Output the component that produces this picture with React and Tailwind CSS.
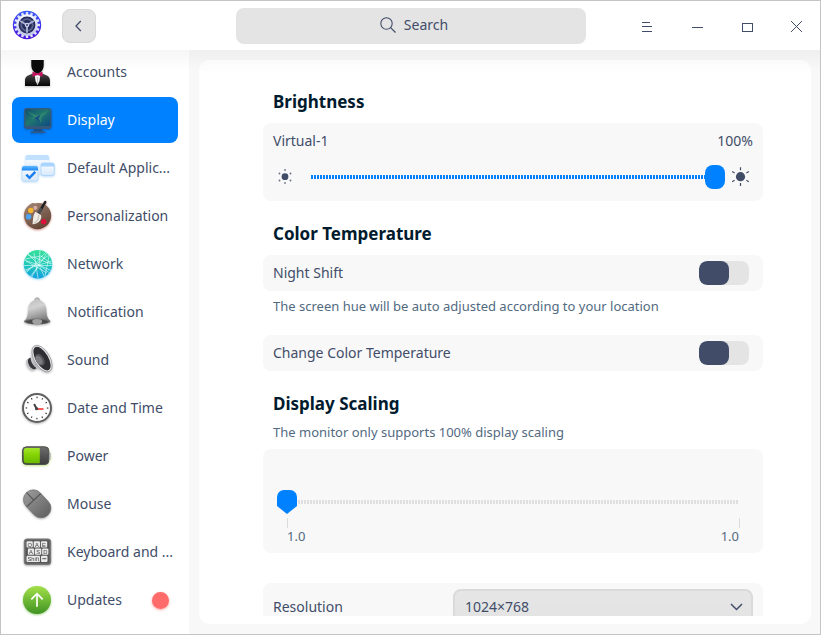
import React from "react";

function AppLogo() {
  const teeth = Array.from({ length: 16 }, (_, i) => i * 22.5);
  return (
    <svg width="30" height="30" viewBox="0 0 30 30" className="-mt-px shrink-0">
      <defs>
        <linearGradient id="logoBg" x1="0" y1="0" x2="0" y2="1">
          <stop offset="0" stopColor="#3a5cf8" />
          <stop offset="1" stopColor="#4a10d8" />
        </linearGradient>
        <linearGradient id="logoRing" x1="0" y1="0" x2="0" y2="1">
          <stop offset="0" stopColor="#f4f6ff" />
          <stop offset="1" stopColor="#c3c8e8" />
        </linearGradient>
      </defs>
      <circle cx="15" cy="15" r="14.2" fill="url(#logoBg)" />
      {teeth.map((a) => (
        <rect key={a} x="13.8" y="2" width="2.4" height="4" fill="#dfe3fb" transform={`rotate(${a} 15 15)`} />
      ))}
      <circle cx="15" cy="15" r="9.6" fill="#262d5c" stroke="url(#logoRing)" strokeWidth="2.4" />
      <circle cx="15" cy="15" r="5.800" fill="none" stroke="#59628e" strokeWidth="1.800" />
      <path d="M15 15L8.200 11M15 15l6.800-4M15 15v7.800" stroke="#a9b0d2" strokeWidth="1.900" />
      <circle cx="15" cy="15" r="2.200" fill="#cdd2ea" />
      <circle cx="15" cy="15" r="1" fill="#343c70" />
    </svg>
  );
}

function AccountsIcon() {
  return (
    <svg width="32" height="32" viewBox="0 0 32 32" className="drop-shadow-[0_1px_1px_rgba(0,0,0,0.25)]">
      <defs>
        <linearGradient id="suit" x1="0" y1="0" x2="0" y2="1">
          <stop offset="0" stopColor="#4a4a4a" />
          <stop offset="1" stopColor="#050505" />
        </linearGradient>
      </defs>
      <path d="M4 30v-5c0-4 2-5.500 5.500-6.500L13 17h7l3.500 1.500C27 19.500 29 21 29 25v5z" fill="url(#suit)" />
      <path d="M13.500 17.500h6L18.500 25l-2 4-2-4z" fill="#f5f5f5" />
      <path d="M10.300 3c0-2 12.400-2 12.400 0v6c0 4-2.500 8.500-6.200 8.500s-6.200-4.500-6.200-8.500z" fill="#0b0b0b" />
      <path d="M11.500 15.800l5 1.500 5-1.500v5l-5-1.700-5 1.700z" fill="#c2145f" />
      <path d="M16.500 21v8" stroke="#bbb" strokeWidth=".8" />
    </svg>
  );
}

function DisplayIcon() {
  return (
    <svg width="32" height="32" viewBox="0 0 32 32" className="drop-shadow-[0_1px_1px_rgba(0,40,90,0.35)]">
      <defs>
        <linearGradient id="screen" x1="0" y1="0" x2="1" y2="1">
          <stop offset="0" stopColor="#124f72" />
          <stop offset=".45" stopColor="#20766f" />
          <stop offset="1" stopColor="#0d4a82" />
        </linearGradient>
      </defs>
      <path d="M13 24h8l.5 3.500h-9z" fill="#164f89" />
      <rect x="9.500" y="27.200" width="15" height="1.800" rx=".9" fill="#2c5987" />
      <rect x="3" y="4" width="27.500" height="21" rx="3" fill="#35587b" />
      <rect x="4.300" y="5.200" width="25" height="16.800" rx="1.800" fill="url(#screen)" />
      <path d="M6 7l10 4.500L27 7l-6 6-1 6-4-3.500L9 14l5-.5z" fill="#43a36b" opacity=".45" />
      <path d="M13 14.500l7-4.500-2.500 4.500 2 4-4-3z" fill="#184d88" />
    </svg>
  );
}

function DefaultAppsIcon() {
  return (
    <svg width="34" height="32" viewBox="0 0 34 32" className="drop-shadow-[0_1px_1px_rgba(90,170,240,0.4)]">
      <defs>
        <linearGradient id="pane" x1="0" y1="0" x2="0" y2="1">
          <stop offset="0" stopColor="#fdfeff" />
          <stop offset="1" stopColor="#d7e8fb" />
        </linearGradient>
        <linearGradient id="bar" x1="0" y1="0" x2="0" y2="1">
          <stop offset="0" stopColor="#5ab7ff" />
          <stop offset="1" stopColor="#1c86f5" />
        </linearGradient>
      </defs>
      <rect x="4.500" y="3" width="23.500" height="19" rx="2" fill="url(#pane)" />
      <path d="M4.500 8V5a2 2 0 0 1 2-2H26a2 2 0 0 1 2 2v3z" fill="#c2e0ff" />
      <rect x="20" y="11" width="13.300" height="12.500" rx="2" fill="url(#pane)" stroke="#a9d2fb" strokeWidth=".8" />
      <path d="M20 14.500V13a2 2 0 0 1 2-2h9.300a2 2 0 0 1 2 2v1.500z" fill="#a9d4ff" />
      <rect x="1" y="14" width="16" height="15" rx="2" fill="url(#pane)" stroke="#b5d9fb" strokeWidth=".7" />
      <path d="M1 18.500V16a2 2 0 0 1 2-2H15a2 2 0 0 1 2 2v2.500z" fill="url(#bar)" />
      <path d="M5.300 22.600l3.200 3.200 5.800-6" fill="none" stroke="#1a7df0" strokeWidth="2.500" />
    </svg>
  );
}

function PersonalizationIcon() {
  return (
    <svg width="32" height="32" viewBox="0 0 32 32" className="drop-shadow-[0_1px_1px_rgba(160,50,30,0.5)]">
      <defs>
        <linearGradient id="wood" x1="0" y1="0" x2=".6" y2="1">
          <stop offset="0" stopColor="#a48878" />
          <stop offset="1" stopColor="#644537" />
        </linearGradient>
      </defs>
      <path d="M16.500 3C24 2 30.200 8 30.200 15.500S24 29.200 16.500 29.200 3 23 3 15.500C3 9 7.500 4.500 11.500 3c2-.5 2.500 1 5 0z" fill="url(#wood)" />
      <circle cx="9.800" cy="10.500" r="2.700" fill="#f6b62f" />
      <circle cx="14.300" cy="7.800" r="2.100" fill="#d7aba3" />
      <circle cx="7.600" cy="16.700" r="2.800" fill="#4da2f4" />
      <circle cx="22.700" cy="21.700" r="2.700" fill="#e0103c" />
      <path d="M24.200 2.200L19.500 10" stroke="#222" strokeWidth="2.600" strokeLinecap="round" />
      <path d="M20.800 8.500l-3.500 5" stroke="#4c4c4c" strokeWidth="3.200" />
      <path d="M14.500 11.800l5.600 3.400c1 4-2.100 8.600-8.600 9.100.8-4 0-8.900 3-12.500z" fill="#efece6" />
      <path d="M17.800 15c0 4-2 6.800-5 8.300" fill="none" stroke="#cac4bb" strokeWidth="1.200" />
    </svg>
  );
}

function NetworkIcon() {
  return (
    <svg width="32" height="32" viewBox="0 0 32 32" className="drop-shadow-[0_1px_1px_rgba(40,180,240,0.5)]">
      <defs>
        <linearGradient id="net" x1="0" y1="0" x2="0" y2="1">
          <stop offset="0" stopColor="#37e09a" />
          <stop offset=".55" stopColor="#1fc7bd" />
          <stop offset="1" stopColor="#139fe0" />
        </linearGradient>
        <clipPath id="netClip">
          <circle cx="17" cy="16.300" r="14.200" />
        </clipPath>
      </defs>
      <circle cx="17" cy="16.300" r="14.200" fill="url(#net)" />
      <g clipPath="url(#netClip)" fill="none" stroke="#e6fffa" strokeWidth=".7" opacity=".85">
        <path d="M3 12l15 5 8-12M3 17.500h28M18 17L7 6M18 17l13-4M19 2l-1 15-8 13M18 17l6 13M4 24l24-17M13 5l4 25M5 13l21 12M25 4L6 24M9 29l9-12 13 6M31 16L20 8l-16 3M28 8l-4 20M7 7l23 9M18 17L4 22M18 17l12 9" />
      </g>
    </svg>
  );
}

function NotificationIcon() {
  return (
    <svg width="32" height="32" viewBox="0 0 32 32" className="drop-shadow-[0_1px_1px_rgba(0,0,0,0.3)]">
      <defs>
        <linearGradient id="bell" x1="0" y1="0" x2=".35" y2="1">
          <stop offset="0" stopColor="#bcbcbc" />
          <stop offset=".4" stopColor="#d2d2d2" />
          <stop offset="1" stopColor="#7c7c7c" />
        </linearGradient>
      </defs>
      <circle cx="16.200" cy="4" r="2.200" fill="#c4c4c4" stroke="#999" strokeWidth=".8" />
      <path d="M16.200 4C10 4 7.600 8.500 7.200 13c-.4 5-.2 8.500-4 12 2 2.500 24.400 2.500 26.200 0-3.800-3.500-3.800-7-4.200-12C24.800 8.500 22.400 4 16.200 4z" fill="url(#bell)" />
      <ellipse cx="16.200" cy="25.500" rx="13.200" ry="2.900" fill="#707070" />
      <ellipse cx="16.200" cy="25.700" rx="11.400" ry="2.100" fill="#4a4a4a" />
      <path d="M11.200 25.200c0-2.800 10-2.800 10 0 0 4.600-10 4.600-10 0z" fill="#a1a1a1" />
    </svg>
  );
}

function SoundIcon() {
  return (
    <svg width="32" height="32" viewBox="0 0 32 32" className="drop-shadow-[0_1px_1px_rgba(0,0,0,0.3)]">
      <defs>
        <linearGradient id="horn" x1="0" y1="0" x2="1" y2="1">
          <stop offset="0" stopColor="#e9e9ec" />
          <stop offset=".5" stopColor="#b4b4ba" />
          <stop offset="1" stopColor="#f0f0f0" />
        </linearGradient>
      </defs>
      <ellipse cx="9.700" cy="20.500" rx="3.800" ry="6.300" transform="rotate(-30 9.700 20.500)" fill="#c2c2c8" />
      <ellipse cx="11.300" cy="19.600" rx="3.600" ry="6.300" transform="rotate(-30 11.300 19.600)" fill="#37373c" />
      <path d="M12.200 1.500C11.200 7 10.500 11 9.500 14c.5 4.500 2.700 8 6.500 10.500 4 .5 9 2.500 13 3z" fill="url(#horn)" />
      <ellipse cx="21" cy="14.600" rx="7" ry="14" transform="rotate(-31 21 14.600)" fill="#2f2f33" stroke="#e4e4e6" strokeWidth="1.500" />
      <ellipse cx="21" cy="14.600" rx="7.800" ry="14.800" transform="rotate(-31 21 14.600)" fill="none" stroke="#77777b" strokeWidth=".5" />
      <ellipse cx="19" cy="15.700" rx="3.900" ry="6.600" transform="rotate(-31 19 15.700)" fill="#55555a" />
      <ellipse cx="18" cy="16.200" rx="2.900" ry="4.800" transform="rotate(-31 18 16.200)" fill="#7c7c82" />
    </svg>
  );
}

function ClockIcon() {
  const marks = Array.from({ length: 12 }, (_, i) => i * 30);
  return (
    <svg width="32" height="32" viewBox="0 0 32 32" className="drop-shadow-[0_1px_1px_rgba(0,0,0,0.3)]">
      <circle cx="16" cy="16" r="14" fill="#fff" stroke="#606060" strokeWidth="2" />
      {marks.map((a) => (
        <rect key={a} x="15.500" y="4.600" width="1.100" height="1.600" fill="#333" transform={`rotate(${a} 16 16)`} />
      ))}
      <path d="M15.500 16.500l-2-3.800" stroke="#404040" strokeWidth="2" strokeLinecap="round" />
      <path d="M16 17h6.500" stroke="#ff5b57" strokeWidth="2" />
      <circle cx="15.600" cy="16.700" r="1.600" fill="#484848" />
    </svg>
  );
}

function PowerIcon() {
  return (
    <svg width="32" height="32" viewBox="0 0 32 32" className="drop-shadow-[0_1px_1px_rgba(120,190,0,0.45)]">
      <defs>
        <linearGradient id="charge" x1="0" y1="0" x2="0" y2="1">
          <stop offset="0" stopColor="#a3e52c" />
          <stop offset=".45" stopColor="#84d400" />
          <stop offset="1" stopColor="#6ab900" />
        </linearGradient>
        <linearGradient id="cell" x1="0" y1="0" x2="0" y2="1">
          <stop offset="0" stopColor="#6d6d6d" />
          <stop offset="1" stopColor="#3c3c3c" />
        </linearGradient>
      </defs>
      <rect x="27" y="12.500" width="3" height="7" rx="1" fill="#c3c3c3" />
      <rect x="1.500" y="6.800" width="26.300" height="17.700" rx="4" fill="url(#cell)" stroke="#505050" />
      <path d="M18.800 8H5a2.500 2.500 0 0 0-2.300 2.200v10.600A2.500 2.500 0 0 0 5 23.300h13.800z" fill="url(#charge)" />
    </svg>
  );
}

function MouseIcon() {
  return (
    <svg width="32" height="32" viewBox="0 0 32 32" className="drop-shadow-[0_1px_1px_rgba(0,0,0,0.3)]">
      <defs>
        <linearGradient id="mouseBody" x1="0" y1="0" x2="0" y2="1">
          <stop offset="0" stopColor="#989898" />
          <stop offset="1" stopColor="#636363" />
        </linearGradient>
      </defs>
      <g transform="rotate(-43 16 16)">
        <rect x="6.500" y="0.500" width="19.500" height="31" rx="9.700" fill="url(#mouseBody)" stroke="#696969" strokeWidth=".6" />
        <path d="M6.800 11h19M16.200 .5V11" stroke="#4e4e4e" strokeWidth="1" />
      </g>
    </svg>
  );
}

function KeyboardIcon() {
  const keys = [
    [5.5, 5.3, "Q"], [12.700, 5.3, "A"], [19.900, 5.3, "E"],
    [6.900, 12.500, "A"], [14, 12.500, "S"], [21.100, 12.500, "D"],
  ];
  return (
    <svg width="32" height="32" viewBox="0 0 32 32" className="font-['Liberation_Sans',sans-serif] drop-shadow-[0_1px_1px_rgba(0,0,0,0.3)]">
      <rect x="3.300" y="3" width="26.400" height="25.500" rx="2.500" fill="#666" stroke="#777" />
      <rect x="5" y="4.700" width="23" height="22" fill="#555" />
      {keys.map(([x, y, t], i) => (
        <g key={i}>
          <rect x={x} y={y} width="6.300" height="6.300" rx="1" fill="#e9e9e9" />
          <text x={x + 3.150} y={y + 5.300} fontSize="5.800" textAnchor="middle" fill="#444">{t}</text>
        </g>
      ))}
      <rect x="5.500" y="19.700" width="13.500" height="6.300" rx="1" fill="#e9e9e9" />
      <text x="12.200" y="25" fontSize="5.800" textAnchor="middle" fill="#444">Shift</text>
      <rect x="20" y="19.700" width="6.500" height="6.300" rx="1" fill="#e9e9e9" />
      <path d="M21.300 22.700h4" stroke="#555" />
    </svg>
  );
}

function UpdatesIcon() {
  return (
    <svg width="32" height="32" viewBox="0 0 32 32" className="drop-shadow-[0_1px_1px_rgba(80,170,30,0.5)]">
      <defs>
        <linearGradient id="upd" x1="0" y1="0" x2="0" y2="1">
          <stop offset="0" stopColor="#a3e048" />
          <stop offset="1" stopColor="#3f9324" />
        </linearGradient>
      </defs>
      <circle cx="16" cy="16" r="14" fill="url(#upd)" />
      <path d="M16 22.700V10M10.300 15.300L16 9.600l5.700 5.700" fill="none" stroke="#fff" strokeWidth="1.700" />
    </svg>
  );
}

const items = [
  { label: "Accounts", Icon: AccountsIcon },
  { label: "Display", Icon: DisplayIcon, active: true },
  { label: "Default Applic...", Icon: DefaultAppsIcon },
  { label: "Personalization", Icon: PersonalizationIcon },
  { label: "Network", Icon: NetworkIcon },
  { label: "Notification", Icon: NotificationIcon },
  { label: "Sound", Icon: SoundIcon },
  { label: "Date and Time", Icon: ClockIcon },
  { label: "Power", Icon: PowerIcon },
  { label: "Mouse", Icon: MouseIcon },
  { label: "Keyboard and ...", Icon: KeyboardIcon },
  { label: "Updates", Icon: UpdatesIcon, badge: true },
];

function TitleBar() {
  return (
    <header className="flex h-[49px] shrink-0 items-center bg-white pl-[11px]">
      <AppLogo />
      <button className="mt-px ml-5 flex h-[34px] w-[34px] items-center justify-center rounded-lg border border-[#d9d9d9] bg-[#e4e4e4]">
        <svg width="10" height="12" viewBox="0 0 10 12">
          <path d="M6.800 1L2 6l4.800 5" fill="none" stroke="#414d68" strokeWidth="1.300" />
        </svg>
      </button>
      <div className="ml-[140px] flex h-9 w-[350px] items-center justify-center gap-2 rounded-lg bg-[#e4e4e4] pb-px pl-[6px]">
        <svg width="16" height="16" viewBox="0 0 16 16">
          <circle cx="6.500" cy="6.500" r="5.700" fill="none" stroke="#414d68" strokeWidth="1.100" />
          <path d="M10.600 10.600L15.500 15.500" stroke="#414d68" strokeWidth="1.200" />
        </svg>
        <span>Search</span>
      </div>
      <div className="ml-[55px] flex items-center gap-[38px] pt-[2px]">
        <svg width="12" height="12" viewBox="0 0 12 12" shapeRendering="crispEdges">
          <path d="M1 1.500h8M1 5.500h10M1 10.500h10" stroke="#414d68" />
        </svg>
        <svg width="12" height="12" viewBox="0 0 12 12" shapeRendering="crispEdges">
          <path d="M1 6.500h11" stroke="#414d68" />
        </svg>
        <svg width="12" height="12" viewBox="0 0 12 12" shapeRendering="crispEdges">
          <rect x="1.500" y="2.500" width="10" height="8" fill="none" stroke="#414d68" />
        </svg>
        <svg width="12" height="12" viewBox="0 0 12 12">
          <path d="M0 0l11 11M11 0L0 11" stroke="#414d68" />
        </svg>
      </div>
    </header>
  );
}

function Sidebar() {
  return (
    <nav className="w-[188px] shrink-0 overflow-hidden bg-white bg-linear-to-b from-[#f6f6f6] to-white bg-[length:100%_20px] bg-no-repeat pt-[10px]">
      <div className="h-[564px] overflow-hidden">
        <ul className="-mt-[11px] flex flex-col gap-[2px] pl-[11px]">
          {items.map(({ label, Icon, active, badge }) => (
            <li
              key={label}
              className={
                active
                  ? "flex h-[46px] w-[166px] items-center rounded-lg bg-[#0081ff] pl-[9px] text-white"
                  : "flex h-[46px] w-[166px] items-center pl-[9px]"
              }
            >
              <span className="flex w-[34px] shrink-0 items-center">
                <Icon />
              </span>
              <span className="ml-3 whitespace-nowrap">{label}</span>
              {badge && (
                <span className="mr-[9px] ml-auto h-[17px] w-[17px] rounded-full bg-[#ff6a6a] shadow-[0_1px_3px_rgba(255,106,106,0.6)]" />
              )}
            </li>
          ))}
        </ul>
      </div>
    </nav>
  );
}

function Toggle() {
  return (
    <div className="h-6 w-[50px] overflow-hidden rounded-lg bg-[#e4e4e4]">
      <div className="h-6 w-[30px] rounded-lg bg-[#414d68]" />
    </div>
  );
}

function SwitchRow({ label }) {
  return (
    <div className="flex h-9 items-center justify-between rounded-lg bg-[#f8f8f8] pr-[14px] pl-[10px]">
      <span>{label}</span>
      <Toggle />
    </div>
  );
}

function Heading({ children }) {
  return <h2 className="pl-[10px] text-[17px] leading-6 font-bold text-[#001a2e]">{children}</h2>;
}

function DimSun() {
  return (
    <svg width="16" height="16" viewBox="0 0 16 16" fill="#414d68">
      <circle cx="8" cy="7.700" r="3.400" />
      <g opacity=".5">
        <rect x="7" y="0" width="2" height="2" />
        <rect x="7" y="13" width="2" height="2" />
      </g>
      <g opacity=".8">
        <circle cx="2.500" cy="4.500" r=".9" />
        <circle cx="13.500" cy="4.500" r=".9" />
        <circle cx="2.500" cy="11.500" r=".9" />
        <circle cx="13.500" cy="11.500" r=".9" />
      </g>
    </svg>
  );
}

function BrightSun() {
  return (
    <svg width="20" height="20" viewBox="0 0 20 20">
      <circle cx="10.500" cy="9.700" r="4.600" fill="#414d68" />
      <path
        d="M10.500 .3v3M10.500 16v3M2.200 4.600l2.400 1.400M18.800 4.600l-2.400 1.400M2.200 14.700l2.400-1.400M18.800 14.700l-2.400-1.400"
        stroke="#414d68"
        strokeWidth="1.200"
      />
    </svg>
  );
}

function BrightnessCard() {
  return (
    <section className="mt-[9px] h-[78px] rounded-lg bg-[#f8f8f8] px-[10px] pt-2">
      <div className="flex h-5 items-center justify-between">
        <span>Virtual-1</span>
        <span>100%</span>
      </div>
      <div className="mt-[14px] flex h-6 items-center pl-1">
        <DimSun />
        <div className="ml-[18px] h-1 w-[394px] bg-[repeating-linear-gradient(90deg,#0081ff_0_2px,transparent_2px_3px)]" />
        <div className="h-6 w-5 rounded-lg bg-[#0081ff]" />
        <div className="ml-[5px]">
          <BrightSun />
        </div>
      </div>
    </section>
  );
}

function ScalingCard() {
  return (
    <section className="mt-[7px] h-[104px] rounded-lg bg-[#f8f8f8] pt-[41px] pr-6 pl-[14px] text-[13px] text-[#526a7f]">
      <div className="flex h-6 items-center">
        <svg width="20" height="24" viewBox="0 0 20 24">
          <path d="M0 7a7 7 0 0 1 7-7h6a7 7 0 0 1 7 7v9L10 24 0 16z" fill="#0081ff" />
        </svg>
        <div className="ml-px h-1 w-[441px] bg-[repeating-linear-gradient(90deg,#dfdfdf_0_2px,transparent_2px_3px)]" />
      </div>
      <div className="mt-1 -mr-px ml-[10px] flex h-[10px] justify-between">
        <i className="w-px bg-[#dcdcdc]" />
        <i className="w-px bg-[#dcdcdc]" />
      </div>
      <div className="ml-[10px] flex justify-between leading-4">
        <span>1.0</span>
        <span>1.0</span>
      </div>
    </section>
  );
}

function ResolutionRow() {
  return (
    <section className="mt-[30px] flex h-12 items-center justify-between rounded-lg bg-[#f8f8f8] px-[10px]">
      <span>Resolution</span>
      <div className="flex h-9 w-[300px] items-center justify-between rounded-lg border-2 border-[#dadada] bg-linear-to-b from-[#e6e6e6] to-[#e3e3e3] pr-2 pl-[10px]">
        <span>1024×768</span>
        <svg width="13" height="8" viewBox="0 0 13 8">
          <path d="M1 1l5.500 5.500L12 1" fill="none" stroke="#414d68" strokeWidth="1.500" />
        </svg>
      </div>
    </section>
  );
}

export default function App() {
  return (
    <div className="flex h-[635px] w-[821px] flex-col overflow-hidden border border-[#c4c4c4] bg-white font-['Noto_Sans',sans-serif] text-sm text-[#414d68]">
      <TitleBar />
      <div className="flex min-h-0 flex-1">
        <Sidebar />
        <main className="flex-1 bg-[#f8f8f8] bg-linear-to-b from-[#efefef] to-[#f8f8f8] bg-[length:100%_20px] bg-no-repeat px-[10px] pt-[10px] pr-[9px]">
          <div className="h-[564px] rounded-[10px] bg-white bg-linear-to-b from-[#fafafa] to-white bg-[length:100%_14px] bg-no-repeat pt-[30px]">
            <div className="ml-16 h-[526px] w-[500px] overflow-hidden">
              <Heading>Brightness</Heading>
              <BrightnessCard />
              <div className="mt-[21px] mb-[9px]">
                <Heading>Color Temperature</Heading>
              </div>
              <SwitchRow label="Night Shift" />
              <p className="mt-[5px] mb-[19px] pl-[10px] text-[13px] leading-5 text-[#526a7f]">
                The screen hue will be auto adjusted according to your location
              </p>
              <SwitchRow label="Change Color Temperature" />
              <div className="mt-[21px]">
                <Heading>Display Scaling</Heading>
              </div>
              <p className="mt-[6px] pl-[10px] text-[13px] leading-5 text-[#526a7f]">
                The monitor only supports 100% display scaling
              </p>
              <ScalingCard />
              <ResolutionRow />
            </div>
          </div>
        </main>
      </div>
    </div>
  );
}
